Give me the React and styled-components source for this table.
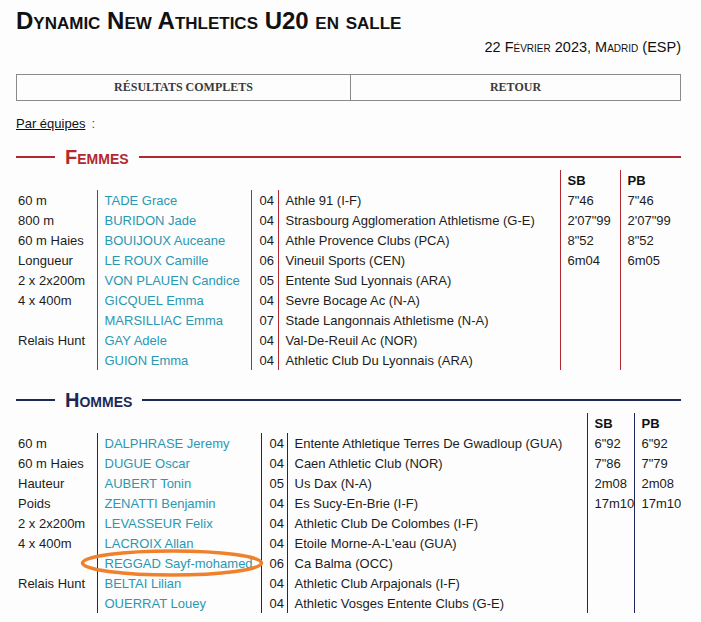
import React from 'react'
import styled, { createGlobalStyle } from 'styled-components'

const GlobalStyle = createGlobalStyle`
  body {
    margin: 0;
    background: #fdfdfd;
    font-family: "Liberation Sans", Arial, sans-serif;
    color: #222;
  }
`;

const femmes = {
  title: 'Femmes',
  color: '#b3282f',
  cols: [81, 154, 27, 282, 60, 61],
  records: [
    { sb: '7"46', pb: '7"46' },
    { sb: '2\'07"99', pb: '2\'07"99' },
    { sb: '8"52', pb: '8"52' },
    { sb: '6m04', pb: '6m05' },
  ],
  rows: [
    ['60 m', 'TADE Grace', '04', 'Athle 91 (I-F)'],
    ['800 m', 'BURIDON Jade', '04', 'Strasbourg Agglomeration Athletisme (G-E)'],
    ['60 m Haies', 'BOUIJOUX Auceane', '04', 'Athle Provence Clubs (PCA)'],
    ['Longueur', 'LE ROUX Camille', '06', 'Vineuil Sports (CEN)'],
    ['2 x 2x200m', 'VON PLAUEN Candice', '05', 'Entente Sud Lyonnais (ARA)'],
    ['4 x 400m', 'GICQUEL Emma', '04', 'Sevre Bocage Ac (N-A)'],
    ['', 'MARSILLIAC Emma', '07', 'Stade Langonnais Athletisme (N-A)'],
    ['Relais Hunt', 'GAY Adele', '04', 'Val-De-Reuil Ac (NOR)'],
    ['', 'GUION Emma', '04', 'Athletic Club Du Lyonnais (ARA)'],
  ],
};

const hommes = {
  title: 'Hommes',
  color: '#1d2856',
  cols: [81, 164, 26, 300, 47, 47],
  records: [
    { sb: '6"92', pb: '6"92' },
    { sb: '7"86', pb: '7"79' },
    { sb: '2m08', pb: '2m08' },
    { sb: '17m10', pb: '17m10' },
  ],
  rows: [
    ['60 m', 'DALPHRASE Jeremy', '04', 'Entente Athletique Terres De Gwadloup (GUA)'],
    ['60 m Haies', 'DUGUE Oscar', '04', 'Caen Athletic Club (NOR)'],
    ['Hauteur', 'AUBERT Tonin', '05', 'Us Dax (N-A)'],
    ['Poids', 'ZENATTI Benjamin', '04', 'Es Sucy-En-Brie (I-F)'],
    ['2 x 2x200m', 'LEVASSEUR Felix', '04', 'Athletic Club De Colombes (I-F)'],
    ['4 x 400m', 'LACROIX Allan', '04', "Etoile Morne-A-L'eau (GUA)"],
    ['', 'REGGAD Sayf-mohamed', '06', 'Ca Balma (OCC)'],
    ['Relais Hunt', 'BELTAI Lilian', '04', 'Athletic Club Arpajonals (I-F)'],
    ['', 'OUERRAT Louey', '04', 'Athletic Vosges Entente Clubs (G-E)'],
  ],
};

const Team = ({ data }) => (
  <>
    <Heading $color={data.color}>
      <span>{data.title}</span>
    </Heading>
    <Table>
      <colgroup>
        {data.cols.map((w, i) => <col key={i} style={{ width: w }} />)}
      </colgroup>
      <tbody>
        <tr>
          <td colSpan={4} />
          <Head $color={data.color}>SB</Head>
          <Head $color={data.color}>PB</Head>
        </tr>
        {data.rows.map((r, i) => {
          const rec = data.records[i] || {};
          return (
            <tr key={i}>
              <Cell>{r[0]}</Cell>
              <Cell $line={data.color} $name>{r[1]}</Cell>
              <Cell $line={data.color} $num>{r[2]}</Cell>
              <Cell $line={data.color}>{r[3]}</Cell>
              <Cell $line={data.color}>{rec.sb}</Cell>
              <Cell $line={data.color}>{rec.pb}</Cell>
            </tr>
          );
        })}
      </tbody>
    </Table>
  </>
);

const App = () => {
  return (
    <Page>
      <GlobalStyle />
      <Title>Dynamic New Athletics U20 en salle</Title>
      <DateLine>22 Février 2023, Madrid (ESP)</DateLine>
      <Buttons>
        <Button>Résultats complets</Button>
        <Button>Retour</Button>
      </Buttons>
      <Filter><a>Par équipes</a><span>:</span></Filter>
      <Team data={femmes} />
      <Team data={hommes} />
      <Circle width="184" height="30" viewBox="0 0 184 30">
        <ellipse cx="92" cy="15" rx="89.5" ry="12" fill="none" stroke="#f0812c" strokeWidth="3.5" />
      </Circle>
    </Page>
  )
}

const Page = styled.div`
  position: relative;
  width: 665px;
  padding: 8px 20px 0 16px;
`;

const Title = styled.h1`
  margin: 0;
  font-size: 24px;
  line-height: 26px;
  font-weight: 700;
  font-variant: small-caps;
  color: #111;
`;

const DateLine = styled.div`
  margin-top: 3px;
  text-align: right;
  font-size: 14.5px;
  line-height: 20px;
  font-variant: small-caps;
  color: #111;
`;

const Buttons = styled.div`
  margin-top: 17px;
  display: grid;
  grid-template-columns: 333px 1fr;
  border: 1px solid #8a8a8a;
  height: 25px;
`;

const Button = styled.div`
  display: flex;
  align-items: center;
  justify-content: center;
  font-family: "Liberation Serif", "Times New Roman", serif;
  font-weight: 700;
  font-size: 12px;
  text-transform: uppercase;
  color: #3a3a3a;
  & + & {
    border-left: 1px solid #8a8a8a;
  }
`;

const Filter = styled.div`
  margin-top: 15px;
  font-size: 13px;
  line-height: 16px;
  display: flex;
  gap: 6px;
  a {
    color: #111;
    text-decoration: underline;
  }
  span {
    color: #444;
  }
`;

const Heading = styled.div`
  margin-top: 13px;
  height: 24px;
  display: flex;
  align-items: center;
  gap: 10px;
  color: ${p => p.$color};
  &::before {
    content: "";
    width: 39px;
    height: 2px;
    background: ${p => p.$color};
  }
  &::after {
    content: "";
    flex: 1;
    height: 2px;
    background: ${p => p.$color};
  }
  span {
    font-size: 20px;
    font-weight: 700;
    font-variant: small-caps;
    line-height: 24px;
  }
  & ~ & {
    margin-top: 18px;
  }
`;

const Table = styled.table`
  margin-top: 1px;
  width: 665px;
  table-layout: fixed;
  border-collapse: collapse;
  font-size: 13px;
`;

const Head = styled.td`
  height: 20px;
  padding: 0 0 0 7px;
  border-left: 1px solid ${p => p.$color};
  font-weight: 700;
  color: #111;
`;

const Cell = styled.td`
  height: 20px;
  padding: 0 0 0 ${p => (p.$line ? (p.$num ? '8px' : '7px') : '2px')};
  border-left: ${p => (p.$line ? `1px solid ${p.$line}` : 'none')};
  color: ${p => (p.$name ? '#2a98b3' : '#1c1c1c')};
  white-space: nowrap;
  overflow: hidden;
`;

const Circle = styled.svg`
  position: absolute;
  left: 80px;
  top: 548px;
  pointer-events: none;
`;

export default App
